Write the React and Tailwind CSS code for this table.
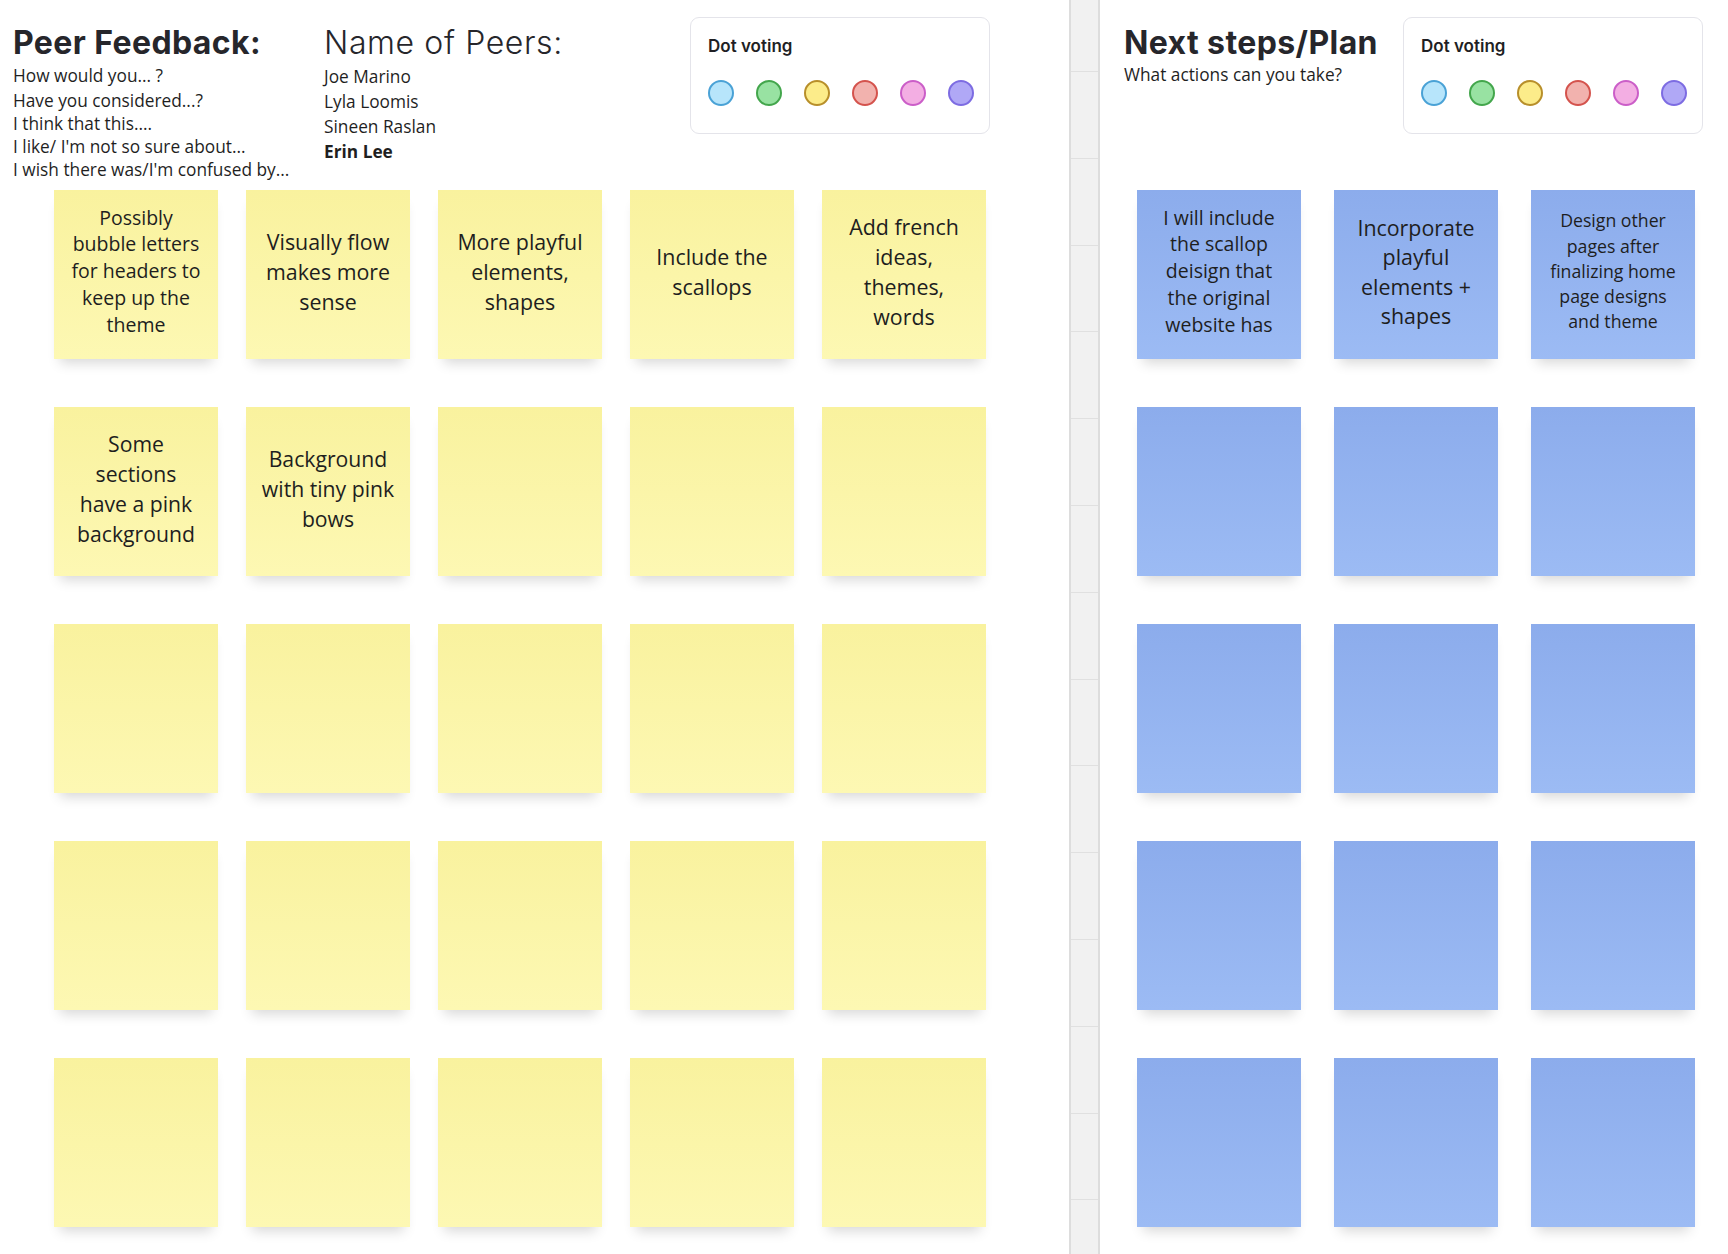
import React from "react";

const dots = [
  { fill: "bg-[#b7e5fb]", border: "border-[#4aa2d6]" },
  { fill: "bg-[#98e2a2]", border: "border-[#43a64c]" },
  { fill: "bg-[#fcec8a]", border: "border-[#b88f2a]" },
  { fill: "bg-[#f2b2ae]", border: "border-[#d4534d]" },
  { fill: "bg-[#f3aee3]", border: "border-[#cb5ec8]" },
  { fill: "bg-[#b0a8f6]", border: "border-[#7d6ce2]" },
];

function DotVoting() {
  return (
    <div className="mt-[17px] w-[300px] h-[117px] rounded-[9px] border border-[#e4e4ea] bg-white pl-[17px] pt-[18px]">
      <div className="text-[17px] leading-[20px] font-semibold text-[#1f1f24] font-['Inter',sans-serif]">
        Dot voting
      </div>
      <div className="flex gap-[22px] mt-[24px]">
        {dots.map((d, i) => (
          <div
            key={i}
            className={`w-[26px] h-[26px] rounded-full border-2 ${d.fill} ${d.border}`}
          />
        ))}
      </div>
    </div>
  );
}

const yellowNotes = [
  { lines: ["Possibly", "bubble letters", "for headers to", "keep up the", "theme"], size: "text-[19.5px] leading-[26.7px]" },
  { lines: ["Visually flow", "makes more", "sense"], size: "text-[21.4px] leading-[30px]" },
  { lines: ["More playful", "elements,", "shapes"], size: "text-[21.4px] leading-[30px]" },
  { lines: ["Include the", "scallops"], size: "text-[21.4px] leading-[30px]" },
  { lines: ["Add french", "ideas,", "themes,", "words"], size: "text-[21.4px] leading-[30px]" },
  { lines: ["Some", "sections", "have a pink", "background"], size: "text-[21.2px] leading-[30px]" },
  { lines: ["Background", "with tiny pink", "bows"], size: "text-[21.2px] leading-[30px]" },
];

const blueNotes = [
  { lines: ["I will include", "the scallop", "deisign that", "the original", "website has"], size: "text-[19.5px] leading-[26.7px]" },
  { lines: ["Incorporate", "playful", "elements +", "shapes"], size: "text-[21.4px] leading-[29.5px]" },
  { lines: ["Design other", "pages after", "finalizing home", "page designs", "and theme"], size: "text-[17.7px] leading-[25.2px]" },
];

function Sticky({ color, note }) {
  const bg =
    color === "yellow"
      ? "bg-linear-to-b from-[#f9f29e] to-[#fdf8b3]"
      : "bg-linear-to-b from-[#8cacec] to-[#9cbbf4]";
  return (
    <div
      className={`w-[164px] h-[169px] ${bg} shadow-[0_10px_12px_-6px_rgba(0,0,0,0.16)] flex items-center justify-center pb-[6px] text-center text-[#1e1e1e] font-['Open_Sans',sans-serif]`}
    >
      {note && (
        <div className={note.size}>
          {note.lines.map((l, i) => (
            <div key={i} className="whitespace-nowrap">
              {l}
            </div>
          ))}
        </div>
      )}
    </div>
  );
}

export default function App() {
  const yellowCells = Array.from({ length: 25 }, (_, i) => yellowNotes[i] || null);
  const blueCells = Array.from({ length: 15 }, (_, i) => blueNotes[i] || null);
  const stripCells = Array.from({ length: 14 }, (_, i) => i);

  return (
    <div className="flex w-[1728px] h-[1254px] bg-white overflow-hidden">
      {/* Left: Peer feedback */}
      <section className="w-[1069px] shrink-0 flex flex-col">
        <div className="flex h-[190px] items-start">
          <div className="w-[324px] pl-[13px] pt-[24px]">
            <h1 className="text-[32px] leading-[38px] font-bold text-[#26262b] font-['Inter',sans-serif] tracking-[0.4px]">
              Peer Feedback:
            </h1>
            <div className="mt-[2px] text-[17.3px] leading-[23px] text-[#1f1f1f] font-['Open_Sans',sans-serif]">
              <div className="mb-[2px]">How would you... ?</div>
              <div>Have you considered...?</div>
              <div>I think that this....</div>
              <div>I like/ I'm not so sure about...</div>
              <div>I wish there was/I'm confused by...</div>
            </div>
          </div>
          <div className="w-[366px] pt-[24px]">
            <h2 className="text-[32px] leading-[38px] font-light text-[#26262b] font-['Inter',sans-serif] tracking-[0.6px]">
              Name of Peers:
            </h2>
            <div className="mt-[2px] text-[17.3px] leading-[25px] text-[#1f1f1f] font-['Open_Sans',sans-serif]">
              <div>Joe Marino</div>
              <div>Lyla Loomis</div>
              <div>Sineen Raslan</div>
              <div className="font-bold">Erin Lee</div>
            </div>
          </div>
          <DotVoting />
        </div>
        <div className="grid grid-cols-[repeat(5,164px)] gap-x-[28px] gap-y-[48px] pl-[54px]">
          {yellowCells.map((n, i) => (
            <Sticky key={i} color="yellow" note={n} />
          ))}
        </div>
      </section>

      {/* Divider strip */}
      <div className="w-[31px] shrink-0 h-full bg-[#f1f1f1] border-l-2 border-r-2 border-[#dddddd] flex flex-col">
        {stripCells.map((i) => (
          <div
            key={i}
            className={`${i === 0 ? "h-[72px]" : "h-[86.8px]"} shrink-0 border-b border-[#e0e0e0]`}
          />
        ))}
      </div>

      {/* Right: Next steps */}
      <section className="flex-1 flex flex-col">
        <div className="flex h-[190px] items-start">
          <div className="w-[303px] pl-[24px] pt-[24px]">
            <h1 className="text-[32px] leading-[38px] font-bold text-[#26262b] font-['Inter',sans-serif] tracking-[0.4px]">
              Next steps/Plan
            </h1>
            <div className="mt-[1px] text-[17.3px] leading-[23px] text-[#1f1f1f] font-['Open_Sans',sans-serif]">
              What actions can you take?
            </div>
          </div>
          <DotVoting />
        </div>
        <div className="grid grid-cols-[repeat(3,164px)] gap-x-[33px] gap-y-[48px] pl-[37px]">
          {blueCells.map((n, i) => (
            <Sticky key={i} color="blue" note={n} />
          ))}
        </div>
      </section>
    </div>
  );
}
